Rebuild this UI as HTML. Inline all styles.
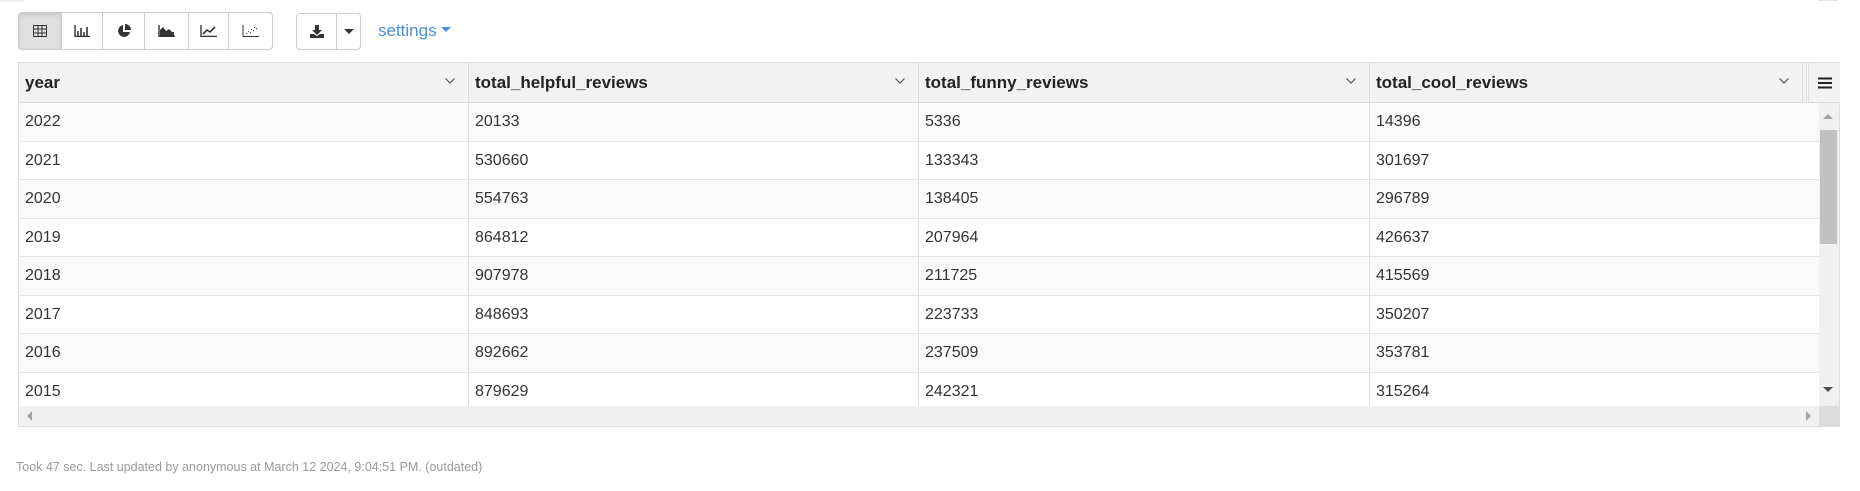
<!DOCTYPE html>
<html><head><meta charset="utf-8"><style>
*{box-sizing:border-box;margin:0;padding:0}
body{width:1860px;height:491px;background:#fff;font-family:"Liberation Sans",Arial,sans-serif;color:#333;position:relative;overflow:hidden}
.abs{position:absolute}
.btns{left:18px;top:12px;height:38px;width:255px;border:1px solid #ccc;border-radius:4px;display:flex;overflow:hidden}
.btns div{height:100%;border-right:1px solid #ccc;display:flex;align-items:center;justify-content:center}
.btns div:last-child{border-right:none}
.dl{left:296px;top:13px;height:37px;width:65px;border:1px solid #ccc;border-radius:4px;display:flex}
.set{left:378px;top:21px;font-size:17px;color:#4a8fd6}
.tbl{left:18px;top:62px;width:1822px;height:365px;border:1px solid #ddd;background:#f7f7f7}
.hd{position:absolute;top:0;height:40px;background:#f2f2f2;border-bottom:1px solid #ddd;border-right:1px solid #ddd;font-weight:bold;font-size:17px;line-height:40px;padding-left:6px;color:#222}
.hd svg{position:absolute;right:13px;top:15px}
.row{position:absolute;left:0;width:1800px;height:38.5px;border-bottom:1px solid #e4e4e4;font-size:16px;line-height:38px}
.row span{position:absolute;top:0;padding-left:6px;height:100%;border-right:1px solid #ddd}
</style></head><body>
<div class="abs" style="left:0;top:0;width:24px;height:2px;background:#eee"></div>
<div class="abs" style="left:1818px;top:0;width:20px;height:1px;background:#e8e8e8"></div>
<div class="abs btns">
<div style="width:43px;background:#e0e0e0;box-shadow:inset 0 2px 4px rgba(0,0,0,.12)"><svg width="14" height="12"><rect x="0.5" y="0.5" width="13" height="11" fill="none" stroke="#333"/><path d="M0 4h14M0 8h14M5 0v12M9 0v12" stroke="#333"/></svg></div>
<div style="width:42px"><svg width="16" height="12"><path d="M1 0v11.5h15" stroke="#333" stroke-width="1.4" fill="none"/><path d="M4 6v5M7 3v8M10 7v4M13 2v9" stroke="#333" stroke-width="1.6" fill="none"/></svg></div>
<div style="width:42px"><svg width="14" height="14"><path d="M6 1A6 6 0 1 0 13 8H6z" fill="#333"/><path d="M8 0v6h6A6 6 0 0 0 8 0z" fill="#333"/></svg></div>
<div style="width:44px"><svg width="17" height="12"><path d="M1 0v11.5h16" stroke="#333" stroke-width="1.4" fill="none"/><path d="M2 11V5l3-3 3 4 3-2 3 3 2 0v4z" fill="#333"/></svg></div>
<div style="width:41px"><svg width="17" height="12"><path d="M1 0v11.5h16" stroke="#333" stroke-width="1.4" fill="none"/><path d="M3 9l4-4 3 2 5-5" stroke="#333" stroke-width="1.6" fill="none"/></svg></div>
<div style="width:43px"><svg width="17" height="12"><path d="M1 0v11.5h16" stroke="#333" stroke-width="1" fill="none"/><g fill="#555"><rect x="4" y="8" width="1.2" height="1.2"/><rect x="6" y="6" width="1.2" height="1.2"/><rect x="8" y="7" width="1.2" height="1.2"/><rect x="9" y="4" width="1.2" height="1.2"/><rect x="11" y="5" width="1.2" height="1.2"/><rect x="12" y="2" width="1.2" height="1.2"/><rect x="14" y="3" width="1.2" height="1.2"/></g></svg></div>
</div>
<div class="abs dl">
<div style="width:40px;border-right:1px solid #ccc;display:flex;align-items:center;justify-content:center"><svg width="14" height="13"><path d="M5 0h4v5h3l-5 5-5-5h3z" fill="#333"/><path d="M0 9h4l3 2 3-2h4v4H0z" fill="#333"/></svg></div>
<div style="flex:1;display:flex;align-items:center;justify-content:center"><svg width="10" height="6"><path d="M0 0h10L5 5z" fill="#333"/></svg></div>
</div>
<div class="abs set">settings <svg width="10" height="6" style="vertical-align:3px"><path d="M0 0h10L5 5z" fill="#4a8fd6"/></svg></div>
<div class="abs tbl">
<div class="hd" style="left:0;width:450px">year<svg width="10" height="6"><path d="M0.5 0.5l4.5 4.5 4.5-4.5" stroke="#555" stroke-width="1.2" fill="none"/></svg></div>
<div class="hd" style="left:450px;width:450px">total_helpful_reviews<svg width="10" height="6"><path d="M0.5 0.5l4.5 4.5 4.5-4.5" stroke="#555" stroke-width="1.2" fill="none"/></svg></div>
<div class="hd" style="left:900px;width:451px">total_funny_reviews<svg width="10" height="6"><path d="M0.5 0.5l4.5 4.5 4.5-4.5" stroke="#555" stroke-width="1.2" fill="none"/></svg></div>
<div class="hd" style="left:1351px;width:433px">total_cool_reviews<svg width="10" height="6"><path d="M0.5 0.5l4.5 4.5 4.5-4.5" stroke="#555" stroke-width="1.2" fill="none"/></svg></div>
<div class="hd" style="left:1784px;width:4px;padding:0"></div>
<div class="abs" style="left:1789px;top:0;width:32px;height:40px;background:#f2f2f2;border-left:1px solid #ddd;border-bottom:1px solid #ddd;display:flex;align-items:center;justify-content:center"><svg width="14" height="12"><path d="M0 1.5h14M0 6h14M0 10.5h14" stroke="#222" stroke-width="2"/></svg></div>
<div style="position:absolute;left:0;top:40px;width:1800px;height:303px;background:#fff;overflow:hidden">
<div class="row" style="top:0;background:#fafafa"><span style="left:0;width:450px">2022</span><span style="left:450px;width:450px">20133</span><span style="left:900px;width:451px">5336</span><span style="left:1351px;width:449px;border:none">14396</span></div>
<div class="row" style="top:38.5px"><span style="left:0;width:450px">2021</span><span style="left:450px;width:450px">530660</span><span style="left:900px;width:451px">133343</span><span style="left:1351px;width:449px;border:none">301697</span></div>
<div class="row" style="top:77px;background:#fafafa"><span style="left:0;width:450px">2020</span><span style="left:450px;width:450px">554763</span><span style="left:900px;width:451px">138405</span><span style="left:1351px;width:449px;border:none">296789</span></div>
<div class="row" style="top:115.5px"><span style="left:0;width:450px">2019</span><span style="left:450px;width:450px">864812</span><span style="left:900px;width:451px">207964</span><span style="left:1351px;width:449px;border:none">426637</span></div>
<div class="row" style="top:154px;background:#fafafa"><span style="left:0;width:450px">2018</span><span style="left:450px;width:450px">907978</span><span style="left:900px;width:451px">211725</span><span style="left:1351px;width:449px;border:none">415569</span></div>
<div class="row" style="top:192.5px"><span style="left:0;width:450px">2017</span><span style="left:450px;width:450px">848693</span><span style="left:900px;width:451px">223733</span><span style="left:1351px;width:449px;border:none">350207</span></div>
<div class="row" style="top:231px;background:#fafafa"><span style="left:0;width:450px">2016</span><span style="left:450px;width:450px">892662</span><span style="left:900px;width:451px">237509</span><span style="left:1351px;width:449px;border:none">353781</span></div>
<div class="row" style="top:269.5px;border:none"><span style="left:0;width:450px">2015</span><span style="left:450px;width:450px">879629</span><span style="left:900px;width:451px">242321</span><span style="left:1351px;width:449px;border:none">315264</span></div>
</div>
<div class="abs" style="left:1800px;top:40px;width:20px;height:303px;background:#f0f0f0"></div>
<div class="abs" style="left:1801px;top:67px;width:17px;height:114px;background:#c1c1c1"></div>
<svg class="abs" style="left:1804px;top:50px" width="10" height="6"><path d="M0 6h10L5 1z" fill="#a3a3a3"/></svg>
<svg class="abs" style="left:1804px;top:324px" width="10" height="6"><path d="M0 0h10L5 5z" fill="#505050"/></svg>
<div class="abs" style="left:0;top:343px;width:1800px;height:20px;background:#f0f0f0"></div>
<div class="abs" style="left:1800px;top:343px;width:20px;height:20px;background:#dcdcdc"></div>
<svg class="abs" style="left:7px;top:348px" width="6" height="10"><path d="M6 0v10L1 5z" fill="#a3a3a3"/></svg>
<svg class="abs" style="left:1787px;top:348px" width="6" height="10"><path d="M0 0v10L5 5z" fill="#a3a3a3"/></svg>
</div>
<div class="abs" style="left:16px;top:460px;font-size:12.5px;color:#999">Took 47 sec. Last updated by anonymous at March 12 2024, 9:04:51 PM. (outdated)</div>
</body></html>
